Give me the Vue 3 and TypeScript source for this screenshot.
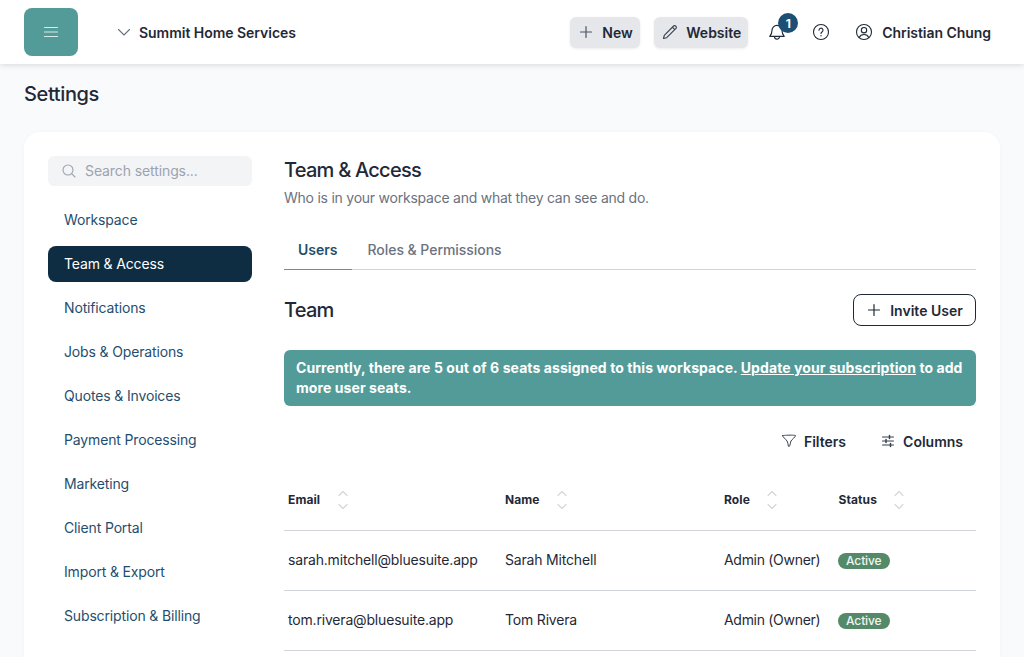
<script setup lang="ts">
const navItems: string[] = [
  'Workspace',
  'Team & Access',
  'Notifications',
  'Jobs & Operations',
  'Quotes & Invoices',
  'Payment Processing',
  'Marketing',
  'Client Portal',
  'Import & Export',
  'Subscription & Billing',
]
const columns: string[] = ['Email', 'Name', 'Role', 'Status']
const users = [
  { email: 'sarah.mitchell@bluesuite.app', name: 'Sarah Mitchell', role: 'Admin (Owner)', status: 'Active' },
  { email: 'tom.rivera@bluesuite.app', name: 'Tom Rivera', role: 'Admin (Owner)', status: 'Active' },
]
</script>

<template>
  <div class="page">
    <header class="topbar">
      <button class="menu-btn" aria-label="Menu">
        <svg width="16" height="16" viewBox="0 0 16 16" fill="none" stroke="#d9ecea" stroke-width="1.2" stroke-linecap="round">
          <path d="M1.500 3.500h13M1.500 8h13M1.500 12.500h13" />
        </svg>
      </button>
      <div class="company">
        <svg width="14" height="14" viewBox="0 0 14 14" fill="none" stroke="#6b7280" stroke-width="1.1" stroke-linecap="round" stroke-linejoin="round">
          <path d="M1.500 4.500 7 10l5.500-5.500" />
        </svg>
        <span>Summit Home Services</span>
      </div>
      <div class="top-actions">
        <button class="grey-btn new-btn">
          <svg width="14" height="14" viewBox="0 0 14 14" fill="none" stroke="#4b5563" stroke-width="1.2" stroke-linecap="round"><path d="M7 1.500v11M1.500 7h11" /></svg>
          <span>New</span>
        </button>
        <button class="grey-btn web-btn">
          <svg width="16" height="16" viewBox="0 0 16 16" fill="none" stroke="#374151" stroke-width="1.1" stroke-linejoin="round" stroke-linecap="round"><path d="M1.500 14.500l.8-3.200L11.600 2a1.400 1.400 0 0 1 2 0l.4.4a1.400 1.400 0 0 1 0 2l-9.300 9.300z M10.400 3.200l2.400 2.400" /></svg>
          <span>Website</span>
        </button>
        <div class="bell">
          <svg width="20" height="20" viewBox="0 0 18 18" fill="none" stroke="#1f2937" stroke-width="1.05" stroke-linecap="round" stroke-linejoin="round"><path d="M4.500 7.500a4.500 4.500 0 0 1 9 0c0 3.200 1 4.500 2 5.500h-13c1-1 2-2.300 2-5.500zM6.800 13.200a2.200 2.200 0 0 0 4.400 0" /></svg>
          <span class="badge">1</span>
        </div>
        <svg class="help" width="18" height="18" viewBox="0 0 18 18" fill="none" stroke="#1f2937" stroke-width="1.1" stroke-linecap="round"><circle cx="9" cy="9" r="7.500" /><path d="M7 7.200a2 2 0 1 1 3 1.700c-.7.4-1 .8-1 1.500" /><path d="M9 12.700v.1" stroke-width="1.400" /></svg>
        <div class="user">
          <svg width="18" height="18" viewBox="0 0 18 18" fill="none" stroke="#1f2937" stroke-width="1.1" stroke-linecap="round"><circle cx="9" cy="9" r="7.500" /><circle cx="9" cy="7.200" r="2.700" /><path d="M4.200 14.500c.8-2 2.600-3 4.800-3s4 1 4.800 3" /></svg>
          <span>Christian Chung</span>
        </div>
      </div>
    </header>

    <main class="main">
      <h1 class="page-title">Settings</h1>
      <section class="card">
        <aside class="sidebar">
          <div class="search">
            <svg width="16" height="16" viewBox="0 0 16 16" fill="none" stroke="#9ca3af" stroke-width="1.1" stroke-linecap="round"><circle cx="7" cy="7" r="5" /><path d="M10.700 10.700 14 14" /></svg>
            <span>Search settings...</span>
          </div>
          <nav class="nav">
            <a v-for="item in navItems" :key="item" class="nav-item" :class="{ active: item === 'Team & Access' }">{{ item }}</a>
          </nav>
        </aside>

        <div class="content">
          <h2 class="section-title">Team &amp; Access</h2>
          <p class="subtitle">Who is in your workspace and what they can see and do.</p>

          <div class="tabs">
            <span class="tab tab-active">Users</span>
            <span class="tab">Roles &amp; Permissions</span>
          </div>

          <div class="team-head">
            <h3 class="section-title">Team</h3>
            <button class="invite">
              <svg width="14" height="14" viewBox="0 0 14 14" fill="none" stroke="#1f2937" stroke-width="1.2" stroke-linecap="round"><path d="M7 1.500v11M1.500 7h11" /></svg>
              <span>Invite User</span>
            </button>
          </div>

          <div class="alert">
            Currently, there are 5 out of 6 seats assigned to this workspace. <u>Update your subscription</u> to add more user seats.
          </div>

          <div class="tools">
            <span class="tool">
              <svg width="16" height="16" viewBox="0 0 16 16" fill="none" stroke="#374151" stroke-width="1" stroke-linejoin="round" stroke-linecap="round"><path d="M1.500 2.500c0-.5 13-.5 13 0 0 1.500-3.500 3.800-4.500 5.500-.4.800-1 4.500-1.500 5.200-.4.500-1 .5-1.200 0C7.300 12 6.600 8.800 6 8 5 6.300 1.500 4 1.500 2.500z" /></svg>
              Filters
            </span>
            <span class="tool">
              <svg width="16" height="16" viewBox="0 0 16 16" fill="none" stroke="#374151" stroke-width="1.100" stroke-linecap="round"><path d="M2.500 4h11M2.500 8h11M2.500 12h11" /><path d="M9.500 2.600v2.800M6 6.600v2.800M10.500 10.600v2.800" stroke-width="1.500" /></svg>
              Columns
            </span>
          </div>

          <div class="row head-row">
            <div v-for="col in columns" :key="col" class="th">
              <span>{{ col }}</span>
              <svg width="12" height="24" viewBox="0 0 12 24" fill="none" stroke="#d1d5db" stroke-width="1.100" stroke-linecap="round" stroke-linejoin="round"><path d="M2 7.500 6 3.500l4 4M2 16.500l4 4 4-4" /></svg>
            </div>
          </div>
          <div v-for="user in users" :key="user.email" class="row body-row">
            <div class="td">{{ user.email }}</div>
            <div class="td">{{ user.name }}</div>
            <div class="td role">{{ user.role }}</div>
            <div class="td"><span class="pill">{{ user.status }}</span></div>
          </div>
        </div>
      </section>
    </main>
  </div>
</template>

<style>
html, body { margin: 0; overflow: hidden; }
</style>

<style scoped>
.page {
  width: 1024px;
  height: 657px;
  overflow: hidden;
  background: #f9fafb;
  font-family: Inter, "Liberation Sans", sans-serif;
  color: #1f2937;
  font-size: 14px;
}
button { font-family: inherit; border: 0; cursor: pointer; padding: 0; }
h1, h2, h3, p { margin: 0; }

.topbar {
  height: 64px;
  background: #fff;
  display: flex;
  align-items: center;
  padding: 0 33px 0 24px;
  box-shadow: 0 1px 6px rgba(0, 0, 0, 0.14);
  position: relative;
}
.menu-btn {
  width: 54px;
  height: 48px;
  border-radius: 8px;
  background: #529b99;
  display: flex;
  align-items: center;
  justify-content: center;
}
.company {
  margin-left: 39px;
  display: flex;
  align-items: center;
  gap: 8px;
  font-weight: 600;
  color: #1f2937;
  letter-spacing: -0.03px;
}
.top-actions { margin-left: auto; display: flex; align-items: center; }
.grey-btn {
  height: 31px;
  border-radius: 6px;
  background: #e5e7eb;
  box-shadow: 0 1px 3px rgba(0, 0, 0, 0.08);
  display: flex;
  align-items: center;
  font-size: 14px;
  font-weight: 600;
  color: #1f2937;
}
.new-btn { width: 70px; gap: 9px; padding-left: 9px; justify-content: flex-start; }
.web-btn { width: 94px; margin-left: 14px; gap: 8px; padding-left: 8px; }
.bell { position: relative; width: 18px; height: 18px; margin-left: 20px; }
.bell svg { display: block; margin: -1px; }
.badge {
  position: absolute;
  left: 10px;
  top: -10px;
  width: 20px;
  height: 20px;
  border-radius: 50%;
  background: #1d4e73;
  color: #fff;
  font-size: 12px;
  font-weight: 700;
  display: flex;
  align-items: center;
  justify-content: center;
}
.help { margin-left: 26px; }
.user { margin-left: 25px; display: flex; align-items: center; gap: 9px; font-weight: 600; letter-spacing: -0.05px; }

.main { padding: 0 24px; }
.page-title { font-size: 20px; font-weight: 500; line-height: 28px; padding-top: 16px; color: #1f2937; letter-spacing: -0.37px; }
.card {
  margin-top: 24px;
  background: #fff;
  border-radius: 16px;
  padding: 24px;
  display: flex;
  gap: 32px;
  box-shadow: 0 0 4px rgba(0, 0, 0, 0.03);
}
.sidebar { width: 204px; flex: none; }
.search {
  height: 30px;
  border-radius: 6px;
  background: #f3f4f6;
  display: flex;
  align-items: center;
  gap: 8px;
  padding-left: 13px;
  padding-bottom: 1px;
  box-sizing: border-box;
  color: #9ca3af;
  letter-spacing: -0.1px;
}
.nav { margin-top: 16px; display: flex; flex-direction: column; gap: 8px; }
.nav-item {
  height: 36px;
  line-height: 36px;
  padding-left: 16px;
  border-radius: 8px;
  color: #1f4e6e;
  letter-spacing: -0.15px;
}
.nav-item.active { background: #0f2d42; color: #fff; }

.content { flex: 1; min-width: 0; }
.section-title { font-size: 20px; font-weight: 500; line-height: 28px; color: #1f2937; letter-spacing: -0.75px; }
.subtitle { margin-top: 4px; line-height: 20px; color: #6b7280; letter-spacing: -0.24px; }
.tabs {
  margin-top: 22px;
  height: 40px;
  display: flex;
  gap: 2px;
  border-bottom: 1px solid #d1d5db;
  box-sizing: border-box;
}
.tab { padding: 0 14px; line-height: 40px; height: 40px; font-weight: 500; color: #6b7280; box-sizing: border-box; letter-spacing: -0.05px; }
.tab-active { font-weight: 600; color: #1f4e6e; border-bottom: 1px solid #529b99; letter-spacing: 0; }
.team-head { margin-top: 24px; height: 32px; display: flex; justify-content: space-between; align-items: center; }
.invite {
  width: 123px;
  height: 32px;
  border: 1px solid #1f2937;
  border-radius: 8px;
  background: #fff;
  display: flex;
  align-items: center;
  justify-content: center;
  gap: 9px;
  padding-left: 1px;
  font-size: 14px;
  font-weight: 600;
  color: #1f2937;
}
.alert {
  margin-top: 24px;
  padding: 8px 12px;
  border-radius: 6px;
  background: #529b99;
  color: #fff;
  font-weight: 700;
  line-height: 20px;
  letter-spacing: 0.08px;
}
.tools { margin-top: 19px; height: 32px; display: flex; justify-content: flex-end; align-items: center; gap: 34px; padding-right: 13px; }
.tool { display: flex; align-items: center; gap: 7px; font-weight: 600; color: #1f2937; }
.row {
  display: grid;
  grid-template-columns: 217px 219px 114.500px 1fr;
  border-bottom: 1px solid #d1d5db;
  box-sizing: border-box;
}
.head-row { margin-top: 12px; height: 62px; align-items: center; }
.body-row { height: 60px; align-items: center; padding-bottom: 2px; }
.th { padding-left: 4px; display: flex; align-items: center; gap: 16.500px; font-size: 12px; font-weight: 700; color: #1f2937; letter-spacing: 0.1px; }
.td { padding-left: 4px; color: #1f2937; letter-spacing: -0.18px; }
.td.role { letter-spacing: -0.3px; }
.pill {
  display: inline-block;
  background: #558a68;
  color: #f1f5f2;
  font-size: 12px;
  font-weight: 500;
  line-height: 16px;
  padding: 0 8px;
  border-radius: 8px;
  margin-left: -0.5px;
  letter-spacing: -0.1px;
}
</style>
